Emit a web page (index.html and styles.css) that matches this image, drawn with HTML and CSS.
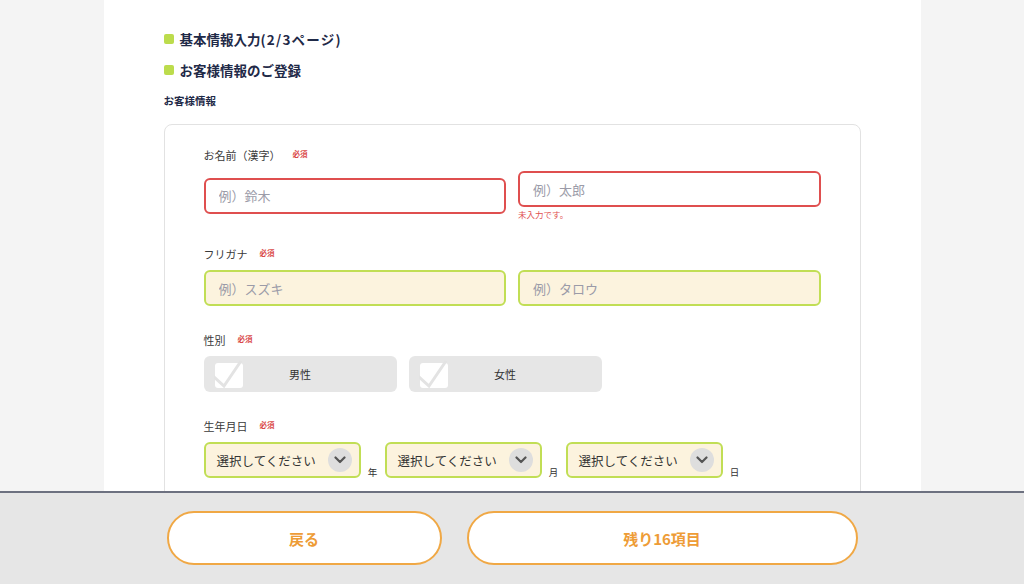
FILE: index.html
```html
<!DOCTYPE html>
<html lang="ja">
<head>
    <meta charset="UTF-8">
    <meta name="viewport" content="width=device-width, initial-scale=1.0">
    <title>お客様情報のご登録</title>
    <link rel="stylesheet" href="styles.css">
</head>
<body>
    <div class="page">
        <h2 class="step-title">基本情報入力<span class="page-count">(2/3ページ)</span></h2>
        <h2 class="step-title">お客様情報のご登録</h2>
        <h3 class="section-title">お客様情報</h3>

        <div class="card">
            <div class="field">
                <div class="label">お名前（漢字）<span class="required">必須</span></div>
                <div class="row row-center">
                    <div class="col"><input class="input error" type="text" placeholder="例）鈴木"></div>
                    <div class="col">
                        <input class="input error" type="text" placeholder="例）太郎">
                        <div class="error-text">未入力です。</div>
                    </div>
                </div>
            </div>

            <div class="field">
                <div class="label">フリガナ<span class="required">必須</span></div>
                <div class="row">
                    <div class="col"><input class="input ok" type="text" placeholder="例）スズキ"></div>
                    <div class="col"><input class="input ok" type="text" placeholder="例）タロウ"></div>
                </div>
            </div>

            <div class="field">
                <div class="label">性別<span class="required">必須</span></div>
                <div class="radios">
                    <label class="radio">
                        <svg class="check" width="32" height="30" viewBox="0 0 32 30">
                            <rect x="1" y="4" width="28" height="25" rx="3" fill="#fff"/>
                            <polyline points="-1,17 10,27 27,2" fill="none" stroke="#e3e3e3" stroke-width="3"/>
                        </svg>
                        <span>男性</span>
                    </label>
                    <label class="radio">
                        <svg class="check" width="32" height="30" viewBox="0 0 32 30">
                            <rect x="1" y="4" width="28" height="25" rx="3" fill="#fff"/>
                            <polyline points="-1,17 10,27 27,2" fill="none" stroke="#e3e3e3" stroke-width="3"/>
                        </svg>
                        <span>女性</span>
                    </label>
                </div>
            </div>

            <div class="field">
                <div class="label">生年月日<span class="required">必須</span></div>
                <div class="dates">
                    <div class="select">選択してください<span class="chevron"><svg width="12" height="8" viewBox="0 0 12 8"><polyline points="1.5,1.5 6,6 10.5,1.5" fill="none" stroke="#555" stroke-width="2.2" stroke-linecap="round" stroke-linejoin="round"/></svg></span></div>
                    <span class="unit">年</span>
                    <div class="select">選択してください<span class="chevron"><svg width="12" height="8" viewBox="0 0 12 8"><polyline points="1.5,1.5 6,6 10.5,1.5" fill="none" stroke="#555" stroke-width="2.2" stroke-linecap="round" stroke-linejoin="round"/></svg></span></div>
                    <span class="unit">月</span>
                    <div class="select">選択してください<span class="chevron"><svg width="12" height="8" viewBox="0 0 12 8"><polyline points="1.5,1.5 6,6 10.5,1.5" fill="none" stroke="#555" stroke-width="2.2" stroke-linecap="round" stroke-linejoin="round"/></svg></span></div>
                    <span class="unit">日</span>
                </div>
            </div>

            <div class="field">
                <div class="label">電話番号<span class="required">必須</span></div>
            </div>
        </div>
    </div>

    <div class="footer">
        <div class="footer-inner">
            <button class="btn btn-back">戻る</button>
            <button class="btn btn-next">残り16項目</button>
        </div>
    </div>
</body>
</html>
```

FILE: styles.css
```css
body {
    font-family: "Noto Sans CJK JP", "Noto Sans", sans-serif;
    background-color: #f4f4f4;
    margin: 0;
    color: #333;
    overflow: hidden;
}
.page {
    width: 817px;
    margin: 0 auto;
    background-color: #fff;
    padding: 29px 60px 120px;
    box-sizing: border-box;
    min-height: 800px;
}
.step-title {
    display: flex;
    align-items: center;
    margin: 0 0 11px;
    font-size: 13.5px;
    line-height: 20px;
    font-weight: bold;
    color: #1f2a48;
}
.step-title::before {
    content: "";
    width: 10px;
    height: 10px;
    border-radius: 2px;
    background-color: #bcdc4c;
    margin-right: 6px;
}
.page-count {
    letter-spacing: 1.2px;
}
.section-title {
    margin: 14px 0 16px;
    font-size: 10.5px;
    line-height: 14px;
    font-weight: bold;
    color: #1f2a48;
}
.card {
    border: 1px solid #e2e2e2;
    border-radius: 8px;
    padding: 21px 39px 40px;
}
.field {
    margin-bottom: 25px;
}
.label {
    font-size: 11px;
    line-height: 16px;
    color: #3a3a3a;
    margin-bottom: 8px;
}
.required {
    font-size: 7.5px;
    font-weight: bold;
    color: #d94848;
    margin-left: 12px;
    vertical-align: 3px;
}
.row {
    display: flex;
    gap: 12px;
}
.row-center {
    align-items: center;
}
.col {
    flex: 1;
}
.input {
    display: block;
    width: 100%;
    height: 36px;
    box-sizing: border-box;
    border-radius: 6px;
    padding: 0 13px;
    font-family: inherit;
    font-size: 13px;
    outline: none;
}
.input::placeholder {
    color: #9b9ba8;
}
.input.error {
    border: 2px solid #df4f4f;
    background-color: #fff;
}
.input.ok {
    border: 2px solid #c1de55;
    background-color: #fcf3de;
}
.error-text {
    font-size: 8.5px;
    line-height: 12px;
    margin-top: 1px;
    color: #df5050;
}
.radios {
    display: flex;
    gap: 12px;
}
.radio {
    width: 193px;
    height: 36px;
    display: flex;
    align-items: center;
    border-radius: 6px;
    background-color: #e6e6e6;
    font-size: 11px;
    color: #333;
}
.check {
    margin-left: 10px;
}
.radio span {
    flex: 1;
    text-align: center;
    margin-right: 42px;
}
.dates {
    display: flex;
    align-items: flex-end;
}
.select {
    width: 157px;
    height: 36px;
    box-sizing: border-box;
    border: 2px solid #c1de55;
    background-color: #fcf3de;
    border-radius: 6px;
    display: flex;
    align-items: center;
    justify-content: space-between;
    padding: 0 7px 0 11px;
    font-size: 12.5px;
    color: #333;
}
.chevron {
    width: 24px;
    height: 24px;
    border-radius: 50%;
    background-color: #dedede;
    display: flex;
    align-items: center;
    justify-content: center;
}
.unit {
    width: 24px;
    text-align: center;
    font-size: 9.5px;
    line-height: 12px;
    color: #333;
}
.footer {
    position: fixed;
    left: 0;
    right: 0;
    bottom: 0;
    height: 93px;
    background-color: #e6e6e6;
    border-top: 2px solid #6d7180;
    box-sizing: border-box;
}
.footer-inner {
    width: 691px;
    margin: 18px auto 0;
    display: flex;
    gap: 25px;
}
.btn {
    height: 54px;
    border: 2px solid #f0a845;
    border-radius: 27px;
    background-color: #fff;
    color: #ee9c36;
    font-family: inherit;
    font-size: 15px;
    font-weight: bold;
}
.btn-back {
    width: 275px;
}
.btn-next {
    flex: 1;
}
```
